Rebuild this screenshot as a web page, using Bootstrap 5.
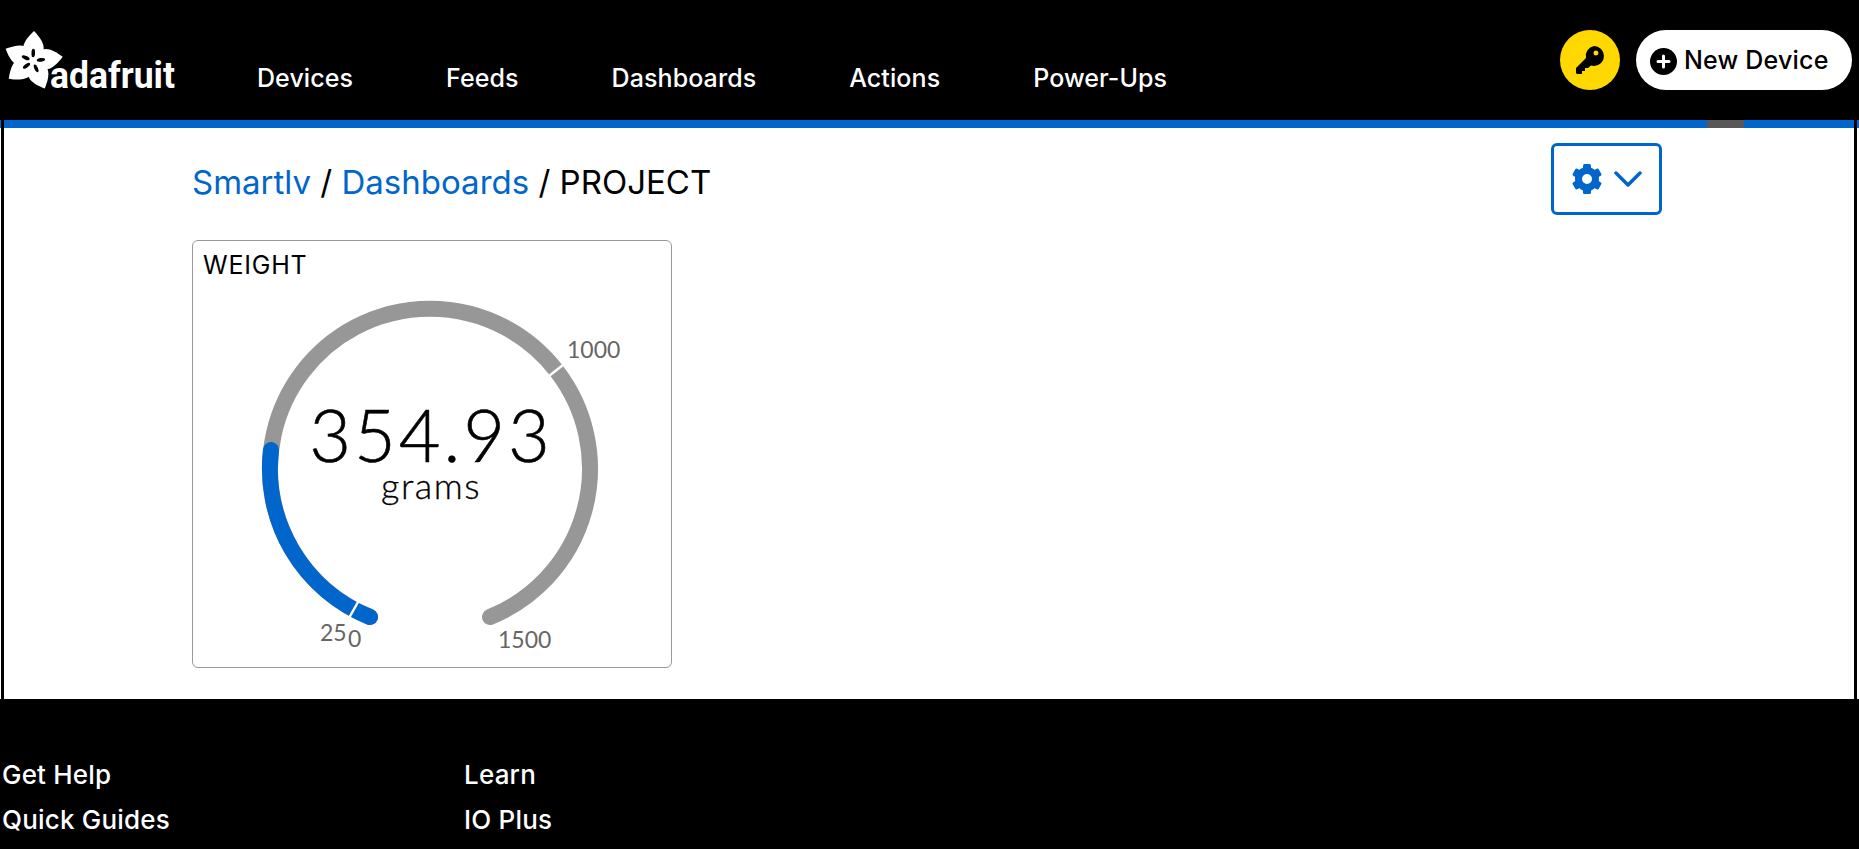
<!DOCTYPE html>
<html lang="en">
<head>
  <meta charset="UTF-8">
  <meta name="viewport" content="width=device-width, initial-scale=1.0">
  <link href="https://cdn.jsdelivr.net/npm/bootstrap@5.3.0/dist/css/bootstrap.min.css" rel="stylesheet">
  <title>PROJECT - Adafruit IO</title>
  <style>
    html, body { height: 849px; overflow: hidden; }
    body { background: #000; font-family: Inter, "Liberation Sans", sans-serif; color: #000; }
    .io-header { height: 120px; padding: 30px 7px 0 0; }
    .io-logo { flex: none; display: block; }
    .io-wordmark { font: 700 36px Roboto, sans-serif; fill: #fff; }
    .io-nav { gap: 93px; margin-left: 79px; padding-top: 32px; }
    .io-nav a { color: #fff; font-size: 25px; font-weight: 500; line-height: 32px; letter-spacing: .08px; text-decoration: none; }
    .io-key { width: 60px; height: 60px; background: #ffd800; }
    .io-new { height: 60px; width: 216px; background: #fff; color: #000; font-size: 25px; font-weight: 500; letter-spacing: .2px; gap: 7px; padding: 2px 0 0 14px; border: 0; }
    .io-page { height: 579px; background: linear-gradient(#0066cc 8px, #fff 8px); }
    .io-frame { height: 579px; margin: 0 2px 0 1px; border-left: 3px solid #000; border-right: 3px solid #000; }
    .io-bar { height: 8px; background: #0066cc; position: relative; }
    .io-bar-mark { position: absolute; left: 1703px; top: 0; width: 37px; height: 8px; background: #585858; }
    .io-main { padding: 15px 192px 0 188px; }
    .io-crumb { font-size: 33px; line-height: 40px; padding-top: 19px; }
    .io-crumb a { color: #0066cc; text-decoration: none; }
    .io-gear { width: 111px; height: 72px; border: 3px solid #0066cc; border-radius: 6px; background: #fff; gap: 12px; }
    .io-block { width: 480px; height: 428px; margin-top: 25px; border: 1px solid #999; border-radius: 6px; position: relative; }
    .io-block-title { font-size: 25px; font-weight: 400; line-height: 30px; letter-spacing: .8px; padding: 9px 0 0 10px; }
    .io-block svg { position: absolute; left: 0; top: 0; }
    .io-gauge-value { font: 300 72px Lato, sans-serif; letter-spacing: 3px; fill: #000; stroke: #000; stroke-width: .6px; }
    .io-gauge-unit { font: 300 36px Lato, sans-serif; letter-spacing: 1.5px; fill: #000; stroke: #000; stroke-width: .3px; }
    .io-gauge-tick { font: 400 23px Lato, sans-serif; fill: #666; }
    .io-footer { padding: 53px 0 0 2px; color: #fff; font-size: 26px; font-weight: 500; line-height: 45px; letter-spacing: .2px; }
    .io-footer-col { width: 462px; }
    .io-footer a { color: #fff; text-decoration: none; display: block; }
  </style>
</head>
<body>
  <header class="io-header d-flex">
    <svg class="io-logo" width="178" height="66" viewBox="0 0 178 66">
      <g transform="translate(33 31)">
        <g fill="#fff">
          <path d="M0 0C-16 -9 -11 -19 0 -30C11 -19 16 -9 0 0Z" transform="rotate(2)"/>
          <path d="M0 0C-16 -9 -11 -19 0 -30C11 -19 16 -9 0 0Z" transform="rotate(82)"/>
          <path d="M0 0C-16 -9 -11 -19 0 -30C11 -19 16 -9 0 0Z" transform="rotate(157)"/>
          <path d="M0 0C-16 -9 -11 -19 0 -30C11 -19 16 -9 0 0Z" transform="rotate(234)"/>
          <path d="M0 0C-16 -9 -11 -19 0 -30C11 -19 16 -9 0 0Z" transform="rotate(294)"/>
        </g>
        <g fill="#000">
          <ellipse cy="-8" rx="1.800" ry="4.200" transform="rotate(2)"/>
          <ellipse cy="-8" rx="1.800" ry="4.200" transform="rotate(82)"/>
          <ellipse cy="-8" rx="1.800" ry="4.200" transform="rotate(157)"/>
          <ellipse cy="-8" rx="1.800" ry="4.200" transform="rotate(234)"/>
          <ellipse cy="-8" rx="1.800" ry="4.200" transform="rotate(294)"/>
        </g>
      </g>
      <text class="io-wordmark" x="50" y="58" textLength="125" lengthAdjust="spacingAndGlyphs">adafruit</text>
    </svg>
    <nav class="io-nav d-flex">
      <a href="#">Devices</a>
      <a href="#">Feeds</a>
      <a href="#">Dashboards</a>
      <a href="#">Actions</a>
      <a href="#">Power-Ups</a>
    </nav>
    <div class="ms-auto d-flex gap-3 align-items-start">
      <button class="io-key btn rounded-circle d-flex align-items-center justify-content-center p-0" type="button">
        <svg width="28" height="28" viewBox="0 0 28 28"><path fill="#000" fill-rule="evenodd" d="M18 0a10 10 0 0 1 0 20c-1 0-2-.2-3-.5L12 22H9v3H6v3H1l-1-1v-5l10-10A10 10 0 0 1 18 0Zm2 4.500a2.500 2.500 0 1 0 0 5 2.500 2.500 0 0 0 0-5Z"/></svg>
      </button>
      <button class="io-new btn rounded-pill d-flex align-items-center" type="button">
        <svg width="27" height="27" viewBox="0 0 27 27"><circle cx="13.500" cy="13.500" r="13.500" fill="#000"/><path stroke="#fff" stroke-width="3" stroke-linecap="round" d="M13.500 8v11M8 13.500h11"/></svg>
        New Device
      </button>
    </div>
  </header>
  <div class="io-page">
    <div class="io-frame">
      <div class="io-bar"><div class="io-bar-mark"></div></div>
      <main class="io-main">
        <div class="d-flex justify-content-between align-items-start">
          <div class="io-crumb"><a href="#">Smartlv</a> / <a href="#">Dashboards</a> / PROJECT</div>
          <button class="io-gear btn d-flex align-items-center justify-content-center p-0" type="button">
            <svg width="30" height="30" viewBox="-15 -15 30 30">
              <circle r="8.500" fill="none" stroke="#0066cc" stroke-width="7"/>
              <g fill="#0066cc">
                <rect x="-4" y="-15" width="8" height="8" rx="1.500"/>
                <rect x="-4" y="-15" width="8" height="8" rx="1.500" transform="rotate(60)"/>
                <rect x="-4" y="-15" width="8" height="8" rx="1.500" transform="rotate(120)"/>
                <rect x="-4" y="-15" width="8" height="8" rx="1.500" transform="rotate(180)"/>
                <rect x="-4" y="-15" width="8" height="8" rx="1.500" transform="rotate(240)"/>
                <rect x="-4" y="-15" width="8" height="8" rx="1.500" transform="rotate(300)"/>
              </g>
            </svg>
            <svg width="28" height="16" viewBox="0 0 28 16"><path fill="none" stroke="#0066cc" stroke-width="3.500" stroke-linecap="round" stroke-linejoin="round" d="M2 2l12 12L26 2"/></svg>
          </button>
        </div>
        <section class="io-block">
          <div class="io-block-title">WEIGHT</div>
          <svg width="478" height="426" viewBox="0 0 478 426">
            <g fill="none" stroke-width="16" stroke-linecap="round">
              <path stroke="#979797" d="M177 376A160 160 0 1 1 297 376"/>
              <path stroke="#0066cc" d="M177 376A160 160 0 0 1 78 209"/>
            </g>
            <g stroke="#fff" stroke-width="2.500">
              <path d="M165 361L156 377"/>
              <path d="M356 135L370 124"/>
            </g>
            <text class="io-gauge-value" x="238" y="221" text-anchor="middle">354.93</text>
            <text class="io-gauge-unit" x="238" y="258" text-anchor="middle">grams</text>
            <text class="io-gauge-tick" x="127" y="400">25</text>
            <text class="io-gauge-tick" x="155" y="406">0</text>
            <text class="io-gauge-tick" x="305" y="407">1500</text>
            <text class="io-gauge-tick" x="374" y="117">1000</text>
          </svg>
        </section>
      </main>
    </div>
  </div>
  <footer class="io-footer d-flex">
    <div class="io-footer-col"><a href="#">Get Help</a><a href="#">Quick Guides</a></div>
    <div class="io-footer-col"><a href="#">Learn</a><a href="#">IO Plus</a></div>
  </footer>
</body>
</html>
